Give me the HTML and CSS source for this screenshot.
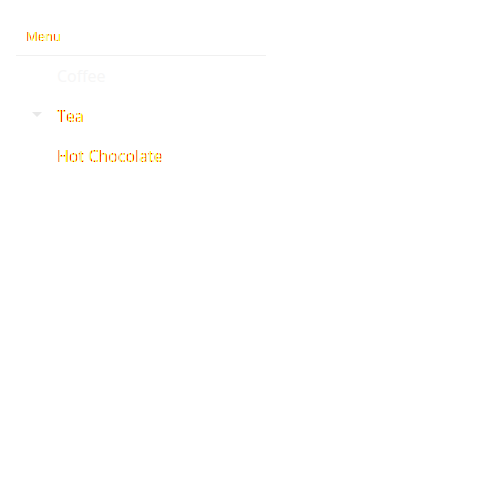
FILE: index.html
```html
<!DOCTYPE html>
<html>
<head>
<meta charset="utf-8">
<link rel="stylesheet" href="styles.css">
</head>
<body>
<div class="menu">
  <div class="menu-title"><span class="hl">Menu</span></div>
  <ul class="items">
    <li class="item"><span class="caret"></span><span class="label dim">Coffee</span></li>
    <li class="item"><span class="caret down"></span><span class="label hl">Tea</span></li>
    <li class="item"><span class="caret"></span><span class="label hl">Hot Chocolate</span></li>
  </ul>
</div>
</body>
</html>
```
FILE: styles.css
```css
html, body { margin: 0; padding: 0; background: #fff; }
body { font-family: "Open Sans", "Noto Sans", sans-serif; }
.menu { width: 250px; margin: 26px 0 0 16px; }
.menu-title { font-size: 13px; line-height: 20px; padding: 0 0 9px 10px; border-bottom: 1px solid #f0f0f0; }
.items { list-style: none; margin: 0; padding: 0; }
.item { display: flex; align-items: center; height: 40px; font-size: 16px; }
.caret { width: 41px; display: flex; justify-content: flex-start; padding-left: 16px; box-sizing: border-box; }
.caret.down::before { content: ""; border-left: 5px solid transparent; border-right: 5px solid transparent; border-top: 5px solid #e8e8e8; margin-top: -4px; }
.dim { color: #f6f6f6; }
.hl {
  color: transparent;
  background: repeating-linear-gradient(90deg, #ffff00 0 1px, #ff0000 1px 2px, #e4e4e4 2px 3px);
  -webkit-background-clip: text;
  background-clip: text;
  -webkit-text-stroke: 0.2px #ffff00;
}
```
